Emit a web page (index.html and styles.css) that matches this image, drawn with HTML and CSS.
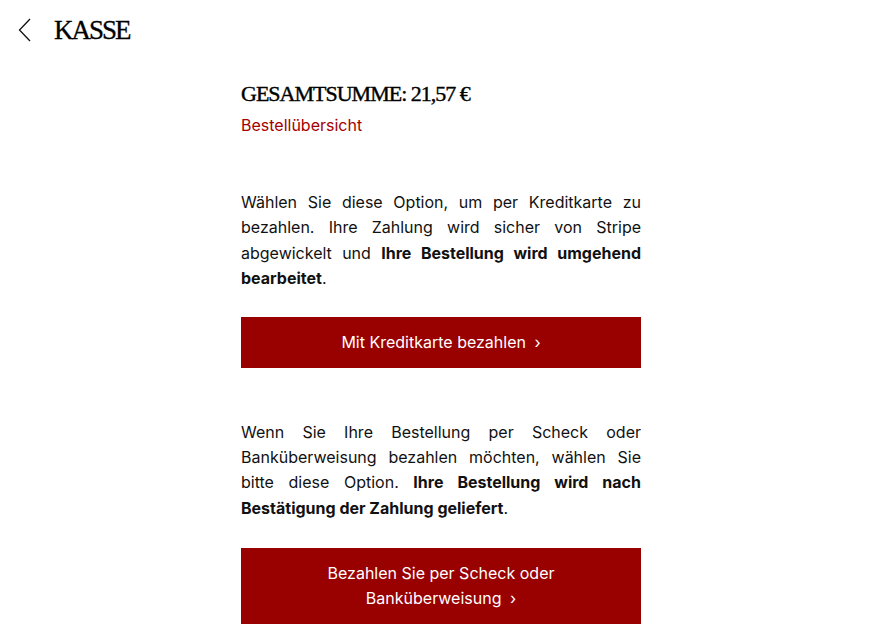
FILE: index.html
```html
<!DOCTYPE html>
<html lang="de">
<head>
<meta charset="utf-8">
<title>Kasse</title>
<link rel="stylesheet" href="styles.css">
</head>
<body>
<header class="topbar">
  <a class="back" href="#" aria-label="Zurück">
    <svg width="14" height="24" viewBox="0 0 14 24"><path d="M12 1 L1.5 12 L12 23" fill="none" stroke="#111" stroke-width="1.3"/></svg>
  </a>
  <h1 class="title">KASSE</h1>
</header>
<main class="content">
  <h2 class="total">GESAMTSUMME: 21,57 €</h2>
  <a class="overview" href="#">Bestellübersicht</a>
  <section class="option">
    <p class="text">Wählen Sie diese Option, um per Kreditkarte zu bezahlen. Ihre Zahlung wird sicher von Stripe abgewickelt und <strong>Ihre Bestellung wird umgehend bearbeitet</strong>.</p>
    <button class="pay">Mit Kreditkarte bezahlen <span class="chev">›</span></button>
  </section>
  <section class="option option-transfer">
    <p class="text">Wenn Sie Ihre Bestellung per Scheck oder Banküberweisung bezahlen möchten, wählen Sie bitte diese Option. <strong>Ihre Bestellung wird nach Bestätigung der Zahlung geliefert</strong>.</p>
    <button class="pay">Bezahlen Sie per Scheck oder Banküberweisung <span class="chev">›</span></button>
  </section>
</main>
</body>
</html>
```
FILE: styles.css
```css
* { box-sizing: border-box; }
body {
  margin: 0;
  background: #fff;
  color: #111;
  font-family: "Inter", "Roboto", sans-serif;
}
.topbar {
  display: flex;
  align-items: center;
  height: 60px;
  padding-left: 18px;
}
.back {
  display: flex;
  width: 14px;
  height: 24px;
  margin-right: 22px;
  margin-top: -1px;
}
.title {
  margin: 0;
  font-family: "Liberation Serif", serif;
  font-weight: 400;
  font-size: 27px;
  letter-spacing: -2px;
  color: #000;
  -webkit-text-stroke: 0.3px #000;
}
.content {
  width: 400px;
  margin: 16px 0 0 241px;
}
.total {
  margin: 0;
  font-family: "Liberation Serif", serif;
  font-weight: 400;
  font-size: 22px;
  line-height: 36px;
  letter-spacing: -1px;
  color: #000;
  -webkit-text-stroke: 0.4px #000;
}
.overview {
  display: block;
  color: #a50000;
  text-decoration: none;
  font-size: 16px;
  line-height: 26px;
}
.option {
  padding-top: 52px;
}
.text {
  margin: 0 0 25px;
  font-size: 16px;
  line-height: 25.4px;
  text-align: justify;
  color: #111;
}
.option-transfer .text {
  margin-bottom: 27px;
}
.text strong { font-weight: 700; }
.pay {
  display: block;
  width: 100%;
  border: 0;
  background: #990000;
  color: #fff;
  font-family: "Inter", sans-serif;
  font-size: 16px;
  line-height: 25px;
  padding: 13px 80px;
  text-align: center;
  cursor: pointer;
}
.chev { margin-left: 4px; }
```
